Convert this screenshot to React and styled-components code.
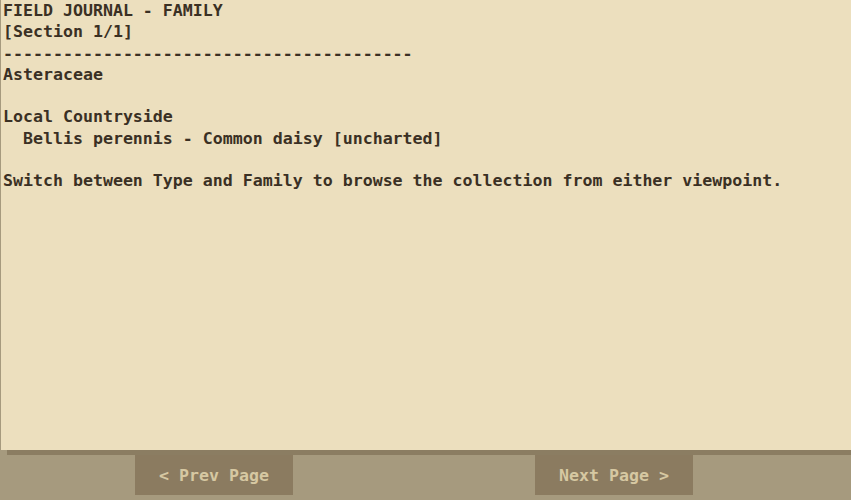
import React from "react";
import styled, { createGlobalStyle } from "styled-components";

const GlobalStyle = createGlobalStyle`
  html, body {
    margin: 0;
    padding: 0;
    background: #a69a7e;
  }
  #root {
    height: 100vh;
  }
`;

const Screen = styled.div`
  display: flex;
  flex-direction: column;
  height: 100vh;
  overflow: hidden;
  font-family: "DejaVu Sans Mono", "Liberation Mono", monospace;
  font-weight: bold;
  font-size: 16.6px;
`;

const Journal = styled.pre`
  flex: 1;
  margin: 0 0 0 1px;
  padding: 0 0 0 2px;
  background: #ecdfbe;
  color: #3a3024;
  font: inherit;
  line-height: 21.3px;
  white-space: pre;
  box-shadow: 6px 5px 0 #8b7d62;
`;

const Footer = styled.div`
  display: flex;
  height: 50px;
  padding: 5px 0 0 135px;
  gap: 242px;
  box-sizing: border-box;
`;

const PageButton = styled.button`
  width: 158px;
  height: 40px;
  border: none;
  background: #8b7b60;
  color: #d6c8a2;
  font: inherit;
  cursor: pointer;
  padding: 0;
`;

const lines = [
  "FIELD JOURNAL - FAMILY",
  "[Section 1/1]",
  "-".repeat(41),
  "Asteraceae",
  "",
  "Local Countryside",
  "  Bellis perennis - Common daisy [uncharted]",
  "",
  "Switch between Type and Family to browse the collection from either viewpoint.",
];

export default function App() {
  return (
    <>
      <GlobalStyle />
      <Screen>
        <Journal>{lines.join("\n")}</Journal>
        <Footer>
          <PageButton>{"< Prev Page"}</PageButton>
          <PageButton>{"Next Page >"}</PageButton>
        </Footer>
      </Screen>
    </>
  );
}
